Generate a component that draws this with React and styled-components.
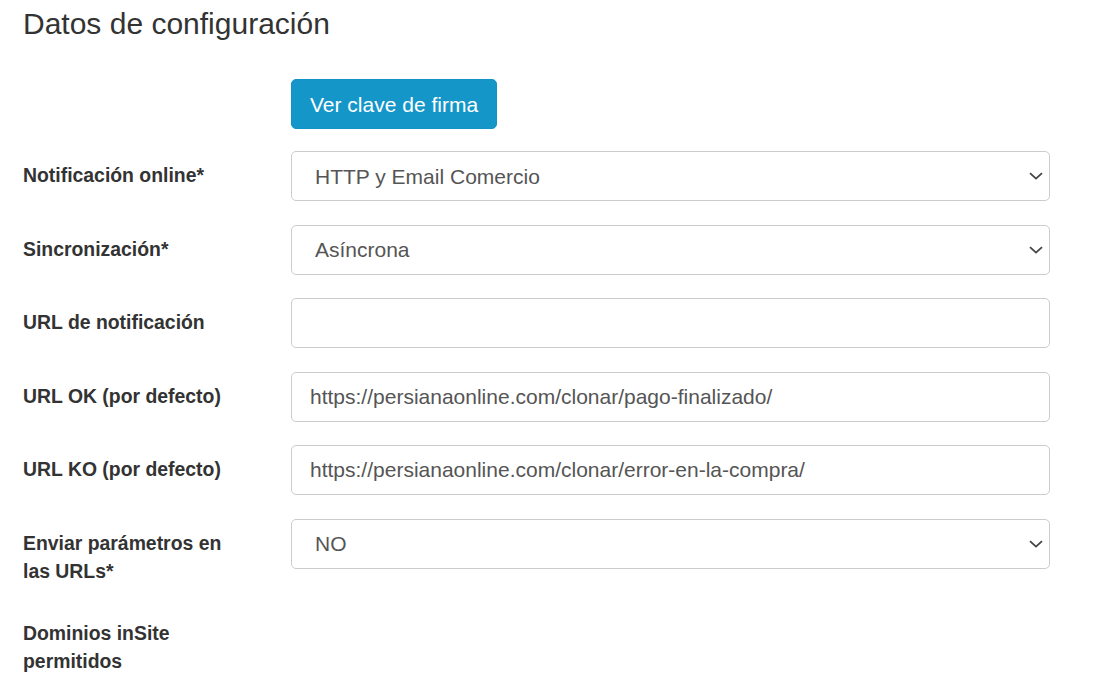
import React from 'react';
import styled, { createGlobalStyle } from 'styled-components';

const GlobalStyle = createGlobalStyle`
    * {
        box-sizing: border-box;
    }

    body {
        margin: 0;
        background: #fff;
        font-family: 'Liberation Sans', Arial, sans-serif;
        color: #333;
    }
`;

const Page = styled.div`
    width: 1093px;
    height: 694px;
    padding: 6px 43px 0 23px;
    overflow: hidden;
`;

const Title = styled.h2`
    margin: 0 0 37px;
    font-size: 30px;
    font-weight: 400;
    line-height: 36px;
    color: #333;
`;

const Form = styled.div`
    display: grid;
    grid-template-columns: 220px 1fr;
    align-items: start;
    column-gap: 48px;
    row-gap: 23.6px;
`;

const Label = styled.label`
    padding-top: 10px;
    font-size: 19.4px;
    font-weight: 700;
    line-height: 28px;
    color: #333;
`;

const Button = styled.button`
    justify-self: start;
    height: 50px;
    margin-bottom: -1.6px;
    padding: 0 18px;
    border: 1px solid #1493c6;
    border-radius: 5px;
    background: #1596c9;
    color: #fff;
    font-family: inherit;
    font-size: 21px;
    line-height: 1;
`;

const Field = styled.div`
    position: relative;
`;

const Input = styled.input`
    display: block;
    width: 100%;
    height: 50px;
    padding: 0 18px;
    border: 1px solid #ccc;
    border-radius: 5px;
    background: #fff;
    font-family: inherit;
    font-size: 21px;
    color: #555;
    outline: none;
`;

const Select = styled.select`
    display: block;
    width: 100%;
    height: 50px;
    padding: 0 40px 0 23px;
    border: 1px solid #ccc;
    border-radius: 5px;
    background: #fff;
    font-family: inherit;
    font-size: 21px;
    color: #555;
    appearance: none;
    outline: none;
`;

const Chevron = styled.svg`
    position: absolute;
    right: 7px;
    top: 50%;
    width: 14px;
    height: 8px;
    transform: translateY(-50%);
    pointer-events: none;
`;

const Spacer = styled.div``;

const SelectField = ({ value, options }) => (
    <Field>
        <Select defaultValue={value}>
            {options.map((o) => (
                <option key={o}>{o}</option>
            ))}
        </Select>
        <Chevron viewBox="0 0 14 8">
            <polyline points="1,1.2 7,6.6 13,1.2" fill="none" stroke="#444" strokeWidth="1.8" />
        </Chevron>
    </Field>
);

const App = () => (
    <Page>
        <GlobalStyle />
        <Title>Datos de configuración</Title>
        <Form>
            <Spacer />
            <Button>Ver clave de firma</Button>

            <Label>Notificación online*</Label>
            <SelectField value="HTTP y Email Comercio" options={['HTTP y Email Comercio', 'HTTP', 'Email Comercio']} />

            <Label>Sincronización*</Label>
            <SelectField value="Asíncrona" options={['Asíncrona', 'Síncrona']} />

            <Label>URL de notificación</Label>
            <Field>
                <Input defaultValue="" />
            </Field>

            <Label>URL OK (por defecto)</Label>
            <Field>
                <Input defaultValue="https://persianaonline.com/clonar/pago-finalizado/" />
            </Field>

            <Label>URL KO (por defecto)</Label>
            <Field>
                <Input defaultValue="https://persianaonline.com/clonar/error-en-la-compra/" />
            </Field>

            <Label>Enviar parámetros en las URLs*</Label>
            <SelectField value="NO" options={['NO', 'SI']} />

            <Label>Dominios inSite permitidos</Label>
            <Spacer />
        </Form>
    </Page>
);

export default App;
